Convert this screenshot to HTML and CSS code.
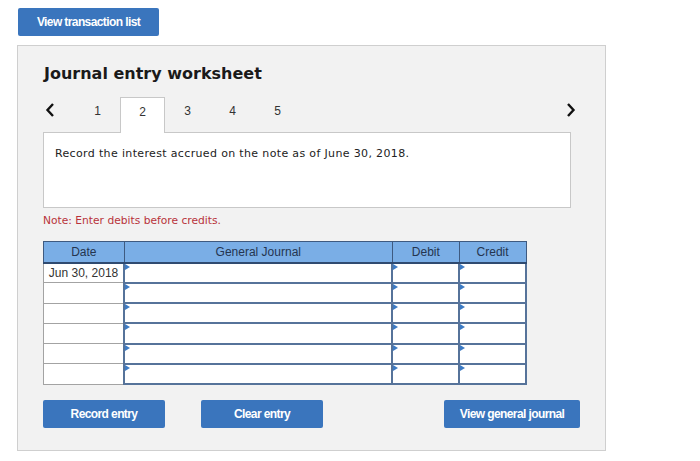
FILE: index.html
```html
<!DOCTYPE html>
<html lang="en">
<head>
    <meta charset="UTF-8">
    <title>Journal entry worksheet</title>
    <link rel="stylesheet" href="styles.css">
</head>
<body>
    <div class="btn top-btn">View transaction list</div>

    <div class="panel">
        <h2 class="title">Journal entry worksheet</h2>

        <div class="tabs">
            <div class="arrow prev">
                <svg width="10" height="16" viewBox="0 0 10 16"><path d="M8 2 L2.5 8 L8 14" fill="none" stroke="#111" stroke-width="2.4"/></svg>
            </div>
            <div class="tab">1</div>
            <div class="tab active">2</div>
            <div class="tab">3</div>
            <div class="tab">4</div>
            <div class="tab">5</div>
            <div class="spacer"></div>
            <div class="arrow next">
                <svg width="10" height="16" viewBox="0 0 10 16"><path d="M2 2 L7.5 8 L2 14" fill="none" stroke="#111" stroke-width="2.4"/></svg>
            </div>
        </div>

        <div class="question">Record the interest accrued on the note as of June 30, 2018.</div>

        <p class="note">Note: Enter debits before credits.</p>

        <table class="journal">
            <thead>
                <tr>
                    <th class="col-date">Date</th>
                    <th class="col-gj">General Journal</th>
                    <th class="col-amt">Debit</th>
                    <th class="col-amt">Credit</th>
                </tr>
            </thead>
            <tbody>
                <tr>
                    <td class="date">Jun 30, 2018</td>
                    <td class="inp"></td>
                    <td class="inp"></td>
                    <td class="inp"></td>
                </tr>
                <tr><td class="date"></td><td class="inp"></td><td class="inp"></td><td class="inp"></td></tr>
                <tr><td class="date"></td><td class="inp"></td><td class="inp"></td><td class="inp"></td></tr>
                <tr><td class="date"></td><td class="inp"></td><td class="inp"></td><td class="inp"></td></tr>
                <tr><td class="date"></td><td class="inp"></td><td class="inp"></td><td class="inp"></td></tr>
                <tr><td class="date"></td><td class="inp"></td><td class="inp"></td><td class="inp"></td></tr>
            </tbody>
        </table>

        <div class="actions">
            <div class="btn record">Record entry</div>
            <div class="btn clear">Clear entry</div>
            <div class="spacer"></div>
            <div class="btn view">View general journal</div>
        </div>
    </div>
</body>
</html>
```

FILE: styles.css
```css
* {
    margin: 0;
    padding: 0;
    box-sizing: border-box;
}

body {
    background-color: #ffffff;
    font-family: "Liberation Sans", Arial, sans-serif;
    color: #333333;
    padding: 8px 0 0 18px;
    width: 700px;
}

.btn {
    display: flex;
    justify-content: center;
    align-items: center;
    height: 28px;
    background-color: #3a75bd;
    color: #ffffff;
    font-family: "Liberation Sans", Arial, sans-serif;
    font-weight: bold;
    font-size: 12px;
    letter-spacing: -0.6px;
    border-radius: 2px;
}

.top-btn {
    width: 141px;
}

.panel {
    margin-top: 9px;
    margin-left: -1px;
    width: 589px;
    background-color: #f2f2f2;
    border: 1px solid #cfcfcf;
    padding: 18px 25px 22px 25px;
}

.title {
    font-family: "DejaVu Sans", Verdana, sans-serif;
    font-size: 16px;
    line-height: 20px;
    font-weight: bold;
    color: #1a1a1a;
    margin-left: 1px;
}

.tabs {
    display: flex;
    align-items: stretch;
    height: 36px;
    margin-top: 13px;
    width: 537px;
}

.arrow {
    display: flex;
    align-items: flex-start;
    padding-top: 5px;
}

.prev {
    width: 32px;
    padding-left: 2px;
}

.next {
    width: 14px;
}

.tab {
    width: 45px;
    font-size: 12px;
    color: #333333;
    text-align: center;
    padding-top: 7px;
}

.tab.active {
    background-color: #ffffff;
    border: 1px solid #c8c8c8;
    border-bottom: none;
    position: relative;
    z-index: 1;
}

.spacer {
    flex: 1;
}

.question {
    margin-top: -1px;
    width: 528px;
    height: 76px;
    background-color: #ffffff;
    border: 1px solid #c8c8c8;
    padding: 14px 11px;
    font-family: "DejaVu Sans", Verdana, sans-serif;
    font-size: 11px;
    letter-spacing: 0.35px;
    color: #222222;
}

.note {
    margin-top: 6px;
    font-family: "DejaVu Sans", Verdana, sans-serif;
    font-size: 10.7px;
    line-height: 14px;
    color: #b8323a;
}

.journal {
    margin-top: 13px;
    border-collapse: collapse;
    width: 484px;
    font-size: 12px;
}

.journal th {
    height: 21px;
    background-color: #7aaee6;
    color: #253550;
    font-weight: normal;
    border: 1px solid #3e5a80;
    border-bottom: 2px solid #2f4a70;
}

.col-date {
    width: 81px;
}

.col-gj {
    width: 270px;
}

.col-amt {
    width: 67px;
}

.journal td {
    height: 20.3px;
    background-color: #ffffff;
}

.journal td.date {
    border: 1px solid #a3a3a3;
    text-align: center;
    color: #333333;
}

.journal td.inp {
    border: 2px solid #56739a;
    position: relative;
}

.journal td.inp::before {
    content: "";
    position: absolute;
    left: 0;
    top: 0;
    border-left: 5px solid #3d7bc4;
    border-top: 3px solid transparent;
    border-bottom: 3px solid transparent;
}

.actions {
    display: flex;
    margin-top: 15px;
    width: 537px;
}

.record,
.clear {
    width: 122px;
    margin-right: 36px;
}

.view {
    width: 136px;
}
```
